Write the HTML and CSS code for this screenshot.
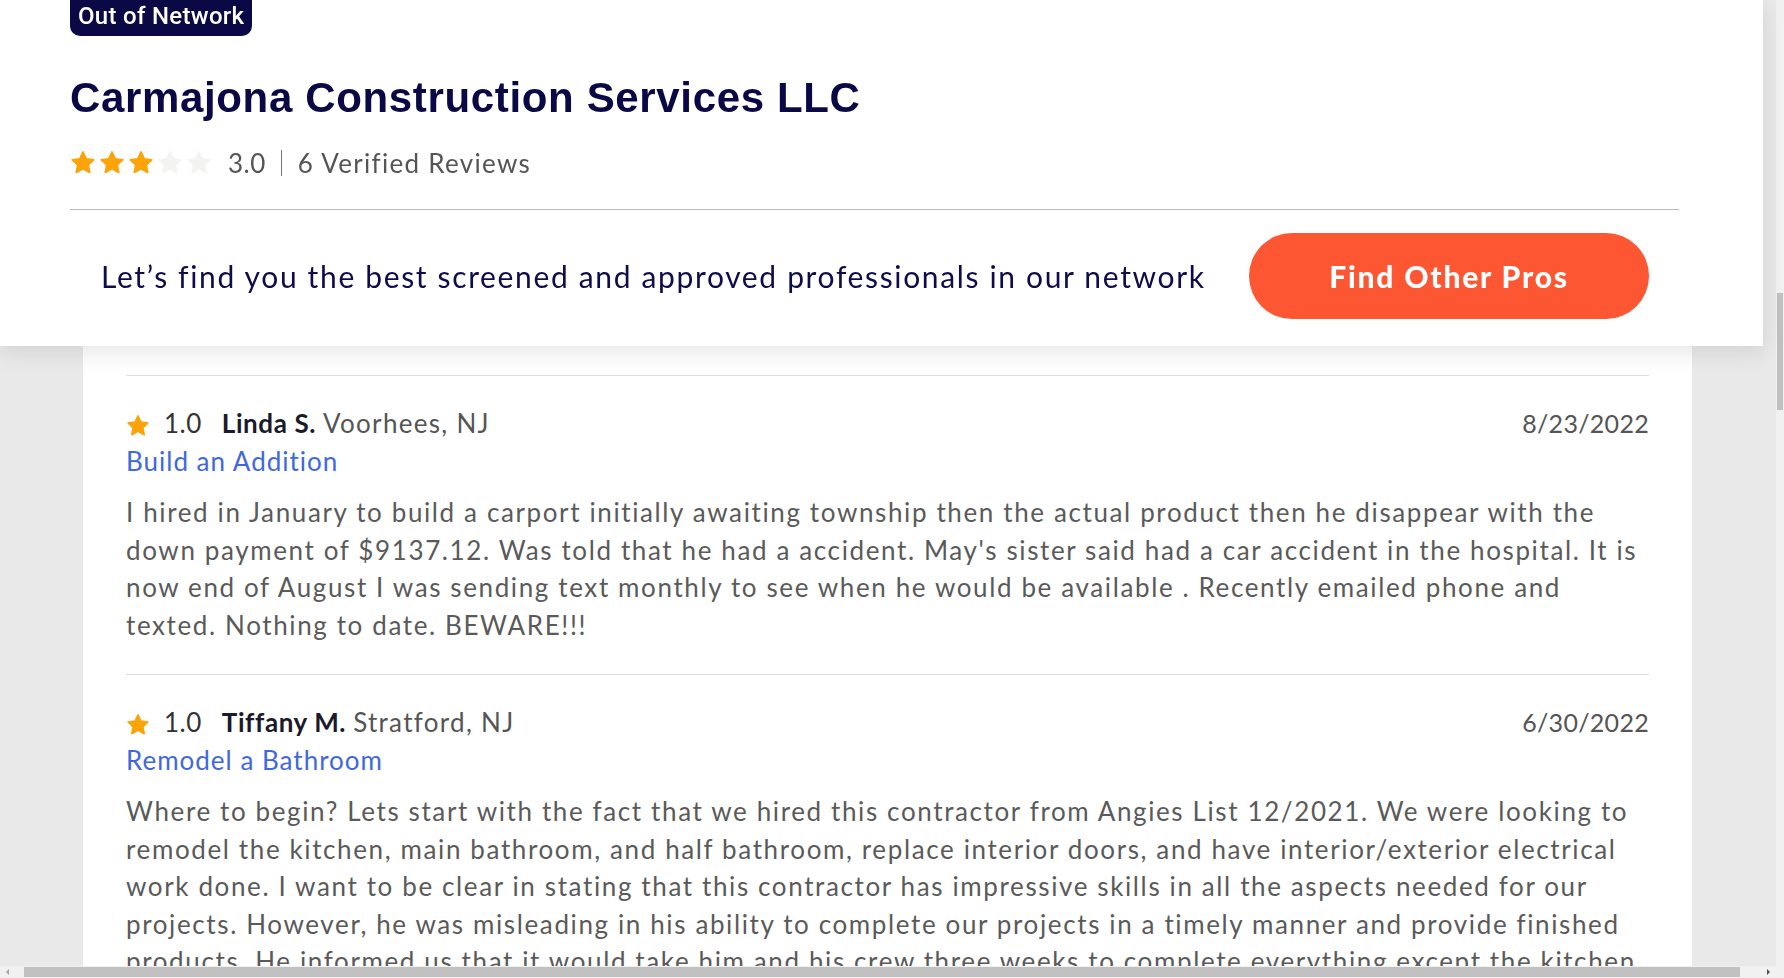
FILE: index.html
```html
<!DOCTYPE html>
<html lang="en">
<head>
<meta charset="utf-8">
<title>Carmajona Construction Services LLC</title>
<link rel="stylesheet" href="styles.css">
</head>
<body>
<div class="page">
  <header class="panel">
    <div class="panel-inner">
      <div class="badge">Out of Network</div>
      <h1 class="title">Carmajona Construction Services LLC</h1>
      <div class="rating">
        <div class="stars">
          <svg class="star on" viewBox="0 0 24 24"><path d="M12 1.8l3 6.3 6.9.9-5 4.8 1.3 6.9L12 17.4l-6.2 3.3 1.3-6.9-5-4.8 6.9-.9z" stroke-linejoin="round" stroke-width="1.6"/></svg>
          <svg class="star on" viewBox="0 0 24 24"><path d="M12 1.8l3 6.3 6.9.9-5 4.8 1.3 6.9L12 17.4l-6.2 3.3 1.3-6.9-5-4.8 6.9-.9z" stroke-linejoin="round" stroke-width="1.6"/></svg>
          <svg class="star on" viewBox="0 0 24 24"><path d="M12 1.8l3 6.3 6.9.9-5 4.8 1.3 6.9L12 17.4l-6.2 3.3 1.3-6.9-5-4.8 6.9-.9z" stroke-linejoin="round" stroke-width="1.6"/></svg>
          <svg class="star off" viewBox="0 0 24 24"><path d="M12 1.8l3 6.3 6.9.9-5 4.8 1.3 6.9L12 17.4l-6.2 3.3 1.3-6.9-5-4.8 6.9-.9z" stroke-linejoin="round" stroke-width="1.6"/></svg>
          <svg class="star off" viewBox="0 0 24 24"><path d="M12 1.8l3 6.3 6.9.9-5 4.8 1.3 6.9L12 17.4l-6.2 3.3 1.3-6.9-5-4.8 6.9-.9z" stroke-linejoin="round" stroke-width="1.6"/></svg>
        </div>
        <span class="score">3.0</span>
        <span class="sep"></span>
        <span class="count">6 Verified Reviews</span>
      </div>
      <hr class="rule">
      <div class="cta">
        <p class="cta-text">Let’s find you the best screened and approved professionals in our network</p>
        <button class="cta-btn">Find Other Pros</button>
      </div>
    </div>
  </header>

  <main class="card">
    <article class="review">
      <div class="review-head">
        <div class="who">
          <svg class="rstar" viewBox="0 0 24 24"><path d="M12 1.8l3 6.3 6.9.9-5 4.8 1.3 6.9L12 17.4l-6.2 3.3 1.3-6.9-5-4.8 6.9-.9z" stroke-linejoin="round" stroke-width="1.6"/></svg>
          <span class="rscore">1.0</span>
          <span class="name">Linda S.</span>
          <span class="loc">Voorhees, NJ</span>
        </div>
        <span class="date">8/23/2022</span>
      </div>
      <a class="cat" href="#">Build an Addition</a>
      <p class="body">I hired in January to build a carport initially awaiting township then the actual product then he disappear with the down payment of $9137.12. Was told that he had a accident. May's sister said had a car accident in the hospital. It is now end of August I was sending text monthly to see when he would be available . Recently emailed phone and texted. Nothing to date. BEWARE!!!</p>
    </article>
    <article class="review">
      <div class="review-head">
        <div class="who">
          <svg class="rstar" viewBox="0 0 24 24"><path d="M12 1.8l3 6.3 6.9.9-5 4.8 1.3 6.9L12 17.4l-6.2 3.3 1.3-6.9-5-4.8 6.9-.9z" stroke-linejoin="round" stroke-width="1.6"/></svg>
          <span class="rscore">1.0</span>
          <span class="name">Tiffany M.</span>
          <span class="loc">Stratford, NJ</span>
        </div>
        <span class="date">6/30/2022</span>
      </div>
      <a class="cat" href="#">Remodel a Bathroom</a>
      <p class="body">Where to begin? Lets start with the fact that we hired this contractor from Angies List 12/2021. We were looking to remodel the kitchen, main bathroom, and half bathroom, replace interior doors, and have interior/exterior electrical work done. I want to be clear in stating that this contractor has impressive skills in all the aspects needed for our projects. However, he was misleading in his ability to complete our projects in a timely manner and provide finished products. He informed us that it would take him and his crew three weeks to complete everything except the kitchen.</p>
    </article>
  </main>
</div>

<div class="vscroll"><div class="vthumb"></div></div>
<div class="hscroll">
  <span class="arrow left"></span>
  <div class="hthumb"></div>
  <span class="arrow right"></span>
</div>
</body>
</html>
```

FILE: styles.css
```css
* { box-sizing: border-box; }
html, body { margin: 0; padding: 0; }
body {
  background: #e9e9e9;
  overflow: hidden;
  height: 978px;
  font-family: Lato, "Noto Sans", sans-serif;
}
.page { width: 1776px; }

.panel {
  position: relative;
  z-index: 2;
  width: 1763px;
  height: 346px;
  background: #fff;
  box-shadow: 0 6px 22px rgba(0, 0, 0, 0.10);
}
.panel-inner {
  margin-left: 70px;
  width: 1609px;
  display: flex;
  flex-direction: column;
  align-items: flex-start;
}
.badge {
  margin-top: -10px;
  height: 46px;
  padding: 10px 8px 0 8px;
  background: #0a0845;
  color: #fff;
  border-radius: 10px;
  font-family: Roboto, "Liberation Sans", sans-serif;
  font-weight: 500;
  font-size: 24px;
  line-height: 32px;
  letter-spacing: 0.3px;
}
.title {
  margin: 37px 0 0 0;
  font-family: "Liberation Sans", Arial, sans-serif;
  font-weight: 700;
  font-size: 42px;
  line-height: 50px;
  color: #0a0845;
  letter-spacing: 0.65px;
}
.rating {
  margin-top: 23px;
  height: 34px;
  display: flex;
  align-items: center;
  font-size: 26px;
  color: #555;
}
.stars { display: flex; gap: 3px; margin-right: 16px; }
.star { width: 26px; height: 26px; }
.star.on { fill: #fba40a; stroke: #fba40a; }
.star.off { fill: #f3f3f1; stroke: #f3f3f1; }
.score { color: #555; letter-spacing: 0.5px; }
.sep {
  width: 1px;
  height: 26px;
  background: #777;
  margin: 0 16px 0 15px;
}
.count { color: #555; letter-spacing: 1.3px; }

.rule {
  width: 100%;
  margin: 29px 0 0 0;
  border: 0;
  border-top: 1px solid #b8b8b8;
  height: 0;
}
.cta {
  margin-top: 23px;
  width: 100%;
  padding: 0 30px 0 31px;
  display: flex;
  align-items: center;
  justify-content: space-between;
}
.cta-text {
  margin: 0;
  font-size: 30px;
  color: #0e0c4a;
  letter-spacing: 1.65px;
}
.cta-btn {
  width: 400px;
  height: 86px;
  border: 0;
  border-radius: 43px;
  background: #fd5632;
  color: #fff;
  font-family: Lato, "Noto Sans", sans-serif;
  font-weight: 900;
  font-size: 30px;
  letter-spacing: 1.8px;
}

.card {
  margin-left: 83px;
  width: 1609px;
  background: #fff;
  padding: 29px 43px 0 43px;
  height: 632px;
}
.review {
  border-top: 1px solid #dcdcdc;
  padding: 29px 0 30px 0;
}
.review-head {
  display: flex;
  align-items: center;
  justify-content: space-between;
  height: 36px;
  font-size: 26px;
}
.who { display: flex; align-items: center; }
.rstar {
  width: 24px;
  height: 24px;
  fill: #fba40a;
  stroke: #fba40a;
  margin: 6px 14px 0 0;
}
.rscore { color: #333; margin-right: 20px; letter-spacing: 0.5px; }
.name { color: #1a1a2a; font-weight: 700; margin-right: 7px; letter-spacing: 0.6px; }
.loc { color: #555; letter-spacing: 1.3px; }
.date { color: #555; font-size: 25px; letter-spacing: 0.3px; }
.cat {
  display: block;
  margin-top: 2px;
  font-size: 26px;
  line-height: 36px;
  color: #3f67e0;
  text-decoration: none;
  letter-spacing: 1px;
}
.body {
  margin: 15px 0 0 0;
  font-size: 26px;
  line-height: 37.5px;
  color: #5a5a5a;
  letter-spacing: 1.62px;
}

.vscroll {
  position: fixed;
  top: 0;
  right: 0;
  width: 8px;
  height: 966px;
  background: #f1f1f1;
}
.vthumb {
  position: absolute;
  left: 1px;
  top: 293px;
  width: 6px;
  height: 117px;
  background: #c1c1c1;
}
.hscroll {
  position: fixed;
  left: 0;
  bottom: 0;
  width: 1784px;
  height: 12px;
  background: #f1f1f1;
}
.hthumb {
  position: absolute;
  left: 24px;
  top: 1px;
  width: 1716px;
  height: 10px;
  background: #c1c1c1;
}
.arrow {
  position: absolute;
  top: 3px;
  width: 0;
  height: 0;
  border-top: 3px solid transparent;
  border-bottom: 3px solid transparent;
}
.arrow.left { left: 6px; border-right: 3px solid #a3a3a3; }
.arrow.right { right: 14px; border-left: 3px solid #505050; }
```
